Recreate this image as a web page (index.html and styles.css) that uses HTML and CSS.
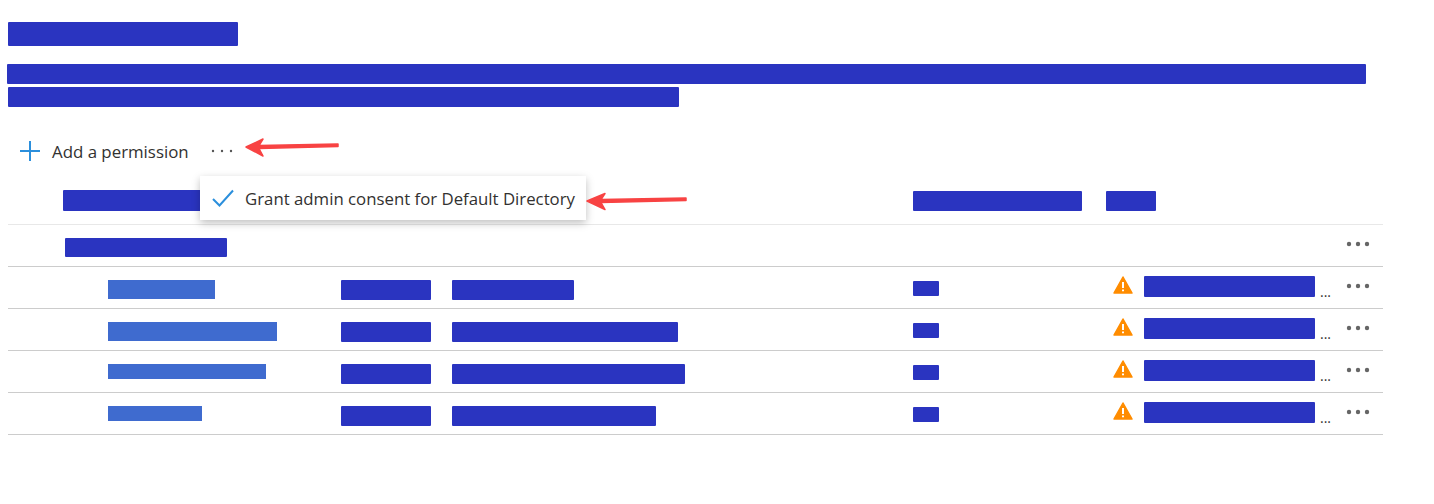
FILE: index.html
```html
<!DOCTYPE html>
<html lang="en">
<head>
  <meta charset="UTF-8" />
  <title>Configured permissions</title>
  <link rel="stylesheet" href="styles.css">
</head>
<body>

  <div class="block title-block"></div>
  <div class="block desc-one"></div>
  <div class="block desc-two"></div>

  <div class="toolbar">
    <svg class="plus-icon" width="20" height="20" viewBox="0 0 20 20"><path d="M10 0v20M0 10h20" /></svg>
    <span class="toolbar-label">Add a permission</span>
    <svg class="more-icon" width="24" height="6" viewBox="0 0 24 6"><circle cx="2" cy="3" r="1.2" /><circle cx="11" cy="3" r="1.2" /><circle cx="20" cy="3" r="1.2" /></svg>
  </div>

  <div class="menu">
    <svg class="check-icon" width="22" height="18" viewBox="0 0 22 18"><path d="M1 10l6.500 6.500L21 1.500" /></svg>
    <span class="menu-label">Grant admin consent for Default Directory</span>
  </div>

  <div class="table">
    <div class="head-row">
      <div class="block head-name"></div>
      <div class="block head-admin"></div>
      <div class="block head-status"></div>
    </div>

    <div class="group-row">
      <div class="block group-name"></div>
      <svg class="row-dots" width="24" height="6" viewBox="0 0 24 6"><circle cx="3" cy="3" r="2.2" /><circle cx="12" cy="3" r="2.2" /><circle cx="21" cy="3" r="2.2" /></svg>
    </div>

    <div class="perm-row">
      <div class="link-cell"><div class="link-bar tall" style="width:107px"></div></div>
      <div class="block type-bar"></div>
      <div class="block desc-bar" style="width:122px"></div>
      <div class="block admin-bar"></div>
      <div class="status-cell">
        <svg class="warn-icon" width="20" height="18" viewBox="0 0 20 18"><path class="warn-shape" d="M10 1L19 17H1Z" /><path class="warn-mark" d="M10 6v6M10 13.500v1.800" /></svg>
        <div class="block status-bar"></div>
        <span class="more-text">...</span>
      </div>
      <svg class="row-dots" width="24" height="6" viewBox="0 0 24 6"><circle cx="3" cy="3" r="2.2" /><circle cx="12" cy="3" r="2.2" /><circle cx="21" cy="3" r="2.2" /></svg>
    </div>

    <div class="perm-row">
      <div class="link-cell"><div class="link-bar tall" style="width:169px"></div></div>
      <div class="block type-bar"></div>
      <div class="block desc-bar" style="width:226px"></div>
      <div class="block admin-bar"></div>
      <div class="status-cell">
        <svg class="warn-icon" width="20" height="18" viewBox="0 0 20 18"><path class="warn-shape" d="M10 1L19 17H1Z" /><path class="warn-mark" d="M10 6v6M10 13.500v1.800" /></svg>
        <div class="block status-bar"></div>
        <span class="more-text">...</span>
      </div>
      <svg class="row-dots" width="24" height="6" viewBox="0 0 24 6"><circle cx="3" cy="3" r="2.2" /><circle cx="12" cy="3" r="2.2" /><circle cx="21" cy="3" r="2.2" /></svg>
    </div>

    <div class="perm-row">
      <div class="link-cell"><div class="link-bar" style="width:158px"></div></div>
      <div class="block type-bar"></div>
      <div class="block desc-bar" style="width:233px"></div>
      <div class="block admin-bar"></div>
      <div class="status-cell">
        <svg class="warn-icon" width="20" height="18" viewBox="0 0 20 18"><path class="warn-shape" d="M10 1L19 17H1Z" /><path class="warn-mark" d="M10 6v6M10 13.500v1.800" /></svg>
        <div class="block status-bar"></div>
        <span class="more-text">...</span>
      </div>
      <svg class="row-dots" width="24" height="6" viewBox="0 0 24 6"><circle cx="3" cy="3" r="2.2" /><circle cx="12" cy="3" r="2.2" /><circle cx="21" cy="3" r="2.2" /></svg>
    </div>

    <div class="perm-row">
      <div class="link-cell"><div class="link-bar" style="width:94px"></div></div>
      <div class="block type-bar"></div>
      <div class="block desc-bar" style="width:204px"></div>
      <div class="block admin-bar"></div>
      <div class="status-cell">
        <svg class="warn-icon" width="20" height="18" viewBox="0 0 20 18"><path class="warn-shape" d="M10 1L19 17H1Z" /><path class="warn-mark" d="M10 6v6M10 13.500v1.800" /></svg>
        <div class="block status-bar"></div>
        <span class="more-text">...</span>
      </div>
      <svg class="row-dots" width="24" height="6" viewBox="0 0 24 6"><circle cx="3" cy="3" r="2.2" /><circle cx="12" cy="3" r="2.2" /><circle cx="21" cy="3" r="2.2" /></svg>
    </div>
  </div>

  <!-- flechas rojas de la anotacion -->
  <svg class="arrow arrow-top" width="100" height="24" viewBox="0 0 100 24"><path d="M3 11L20 3L16 9.500L95 8V10.500L16 12.500L20 20Z" /></svg>
  <svg class="arrow arrow-menu" width="106" height="24" viewBox="0 0 106 24"><path d="M3 12L21 4.500L17 10.500L102 9V11.500L17 13.500L21 20.500Z" /></svg>

</body>
</html>
```

FILE: styles.css
```css
body {
  font-family: 'Open Sans', 'Noto Sans', sans-serif;
  margin: 0;
  padding: 22px 8px 0;
  background: #fff;
  color: #323130;
  position: relative;
}
.block {
  background: #2a34c0;
  border-radius: 1px;
}
.title-block {
  width: 230px;
  height: 24px;
}
.desc-one {
  width: 1359px;
  height: 20px;
  margin: 18px 0 3px -1px;
}
.desc-two {
  width: 671px;
  height: 20px;
}
.toolbar {
  display: flex;
  align-items: center;
  height: 44px;
  margin-top: 22px;
  padding-left: 12px;
}
.plus-icon path {
  stroke: #2b8fdc;
  stroke-width: 2;
  fill: none;
}
.toolbar-label {
  margin: 1px 0 0 12px;
  font-size: 16.85px;
  white-space: nowrap;
}
.more-icon {
  margin-left: 22px;
  fill: #555;
}
.menu {
  position: absolute;
  left: 200px;
  top: 176px;
  width: 386px;
  height: 44px;
  box-sizing: border-box;
  padding-left: 12px;
  display: flex;
  align-items: center;
  background: #fff;
  box-shadow: 0 3px 8px rgba(0,0,0,0.25);
}
.check-icon path {
  stroke: #2b8fdc;
  stroke-width: 2;
  fill: none;
}
.menu-label {
  margin: 1px 0 0 11px;
  font-size: 16.8px;
  white-space: nowrap;
}
.table {
  width: 1375px;
}
.head-row {
  display: flex;
  align-items: flex-start;
  height: 51px;
  border-bottom: 1px solid #e8e8e8;
  padding-left: 55px;
}
.head-name {
  width: 146px;
  height: 21px;
  margin-top: 17px;
}
.head-admin {
  width: 169px;
  height: 20px;
  margin: 18px 0 0 704px;
}
.head-status {
  width: 50px;
  height: 20px;
  margin: 18px 0 0 24px;
}
.group-row {
  display: flex;
  justify-content: space-between;
  height: 41px;
  border-bottom: 1px solid #ccc;
  padding: 0 13px 0 57px;
}
.group-name {
  width: 162px;
  height: 19px;
  margin-top: 13px;
}
.row-dots {
  fill: #666;
  margin-top: 16px;
  flex: none;
}
.perm-row {
  display: grid;
  grid-template-columns: 333px 111px 461px 200px 1fr auto;
  height: 41px;
  border-bottom: 1px solid #ccc;
}
.link-cell {
  padding: 13px 0 0 100px;
}
.link-bar {
  height: 15px;
  background: #3f6bcf;
}
.link-bar.tall {
  height: 19px;
}
.type-bar {
  width: 90px;
  height: 20px;
  margin-top: 13px;
}
.desc-bar {
  height: 20px;
  margin-top: 13px;
}
.admin-bar {
  width: 26px;
  height: 15px;
  margin-top: 14px;
}
.status-cell {
  display: flex;
  align-items: flex-start;
  padding-top: 9px;
}
.warn-icon {
  flex: none;
}
.warn-shape {
  fill: #ff8c00;
  stroke: #ff8c00;
  stroke-width: 1.5;
  stroke-linejoin: round;
}
.warn-mark {
  stroke: #fff;
  stroke-width: 2;
  fill: none;
}
.status-bar {
  width: 171px;
  height: 21px;
  margin-left: 11px;
  flex: none;
}
.more-text {
  font-size: 14px;
  line-height: 16px;
  margin: 8px 0 0 5px;
}
.perm-row .row-dots {
  margin: 16px 13px 0 0;
}
.arrow {
  position: absolute;
}
.arrow path {
  fill: #f84343;
  stroke: #f84343;
  stroke-width: 1.5;
  stroke-linejoin: round;
}
.arrow-top {
  left: 243px;
  top: 136px;
}
.arrow-menu {
  left: 584px;
  top: 189px;
}
```
